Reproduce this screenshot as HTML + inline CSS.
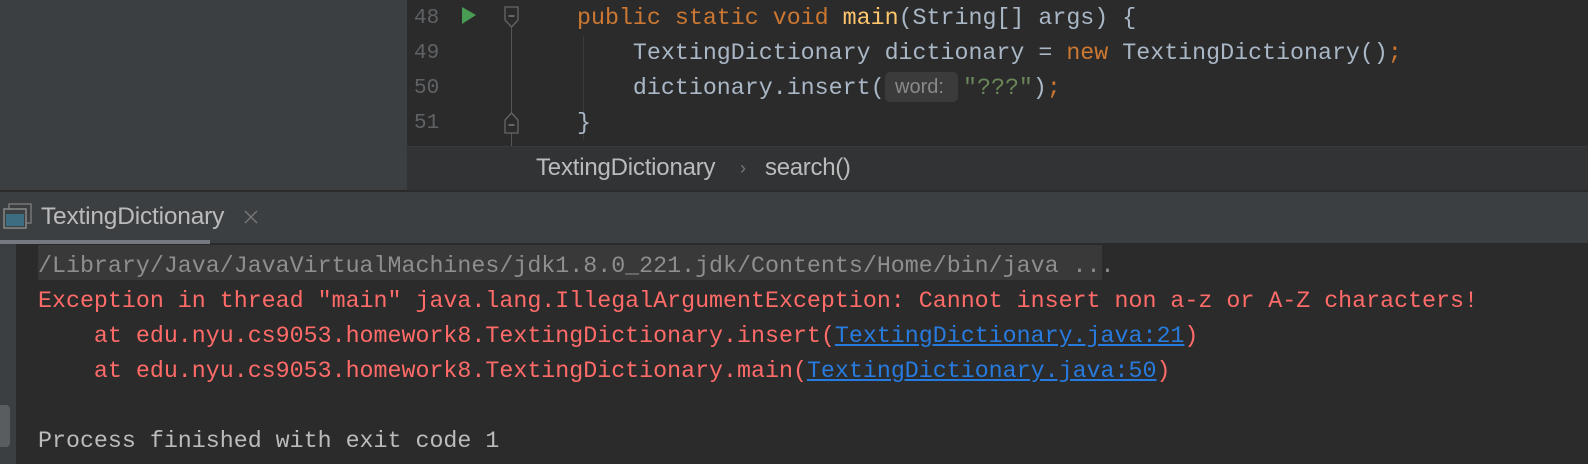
<!DOCTYPE html>
<html><head><meta charset="utf-8"><style>
*{margin:0;padding:0;box-sizing:border-box}
body{width:1588px;height:464px;overflow:hidden;background:#2b2b2b;position:relative;font-family:"Liberation Mono",monospace}
.abs{position:absolute}
.mono{font-family:"Liberation Mono",monospace;font-size:23.3px;white-space:pre;line-height:35px}
.sans{font-family:"Liberation Sans",sans-serif}
.kw{color:#cc7832}.fn{color:#ffc66d}.tx{color:#a9b7c6}.st{color:#6a8759}
.red{color:#ff6b68}.lnk{color:#287bde;text-decoration:underline}
.ln{color:#606366;font-size:21px;left:414px}
</style></head><body>
<div class="abs" style="left:0;top:0;width:407px;height:190px;background:#3c3f41"></div>
<div class="abs" style="left:407px;top:0;width:1181px;height:146px;background:#2b2b2b"></div>
<div class="abs" style="left:407px;top:146px;width:1181px;height:1px;background:#3a3a3a"></div>
<div class="abs" style="left:407px;top:147px;width:1181px;height:43px;background:#313335"></div>
<div class="abs" style="left:0;top:190px;width:1588px;height:2px;background:#2b2b2b"></div>
<div class="abs" style="left:0;top:192px;width:1588px;height:51px;background:#3c3f41"></div>
<div class="abs" style="left:0;top:240px;width:210px;height:4px;background:#747a80"></div>
<div class="abs" style="left:0;top:244px;width:16px;height:220px;background:#3c3f41"></div>
<div class="abs" style="left:0;top:405px;width:10px;height:42px;background:#5a5d60;border-radius:0 4px 4px 0"></div>

<div class="abs mono ln" style="top:1px">48</div>
<div class="abs mono ln" style="top:36px">49</div>
<div class="abs mono ln" style="top:71px">50</div>
<div class="abs mono ln" style="top:106px">51</div>
<svg class="abs" style="left:460px;top:6px" width="18" height="20"><polygon points="2,1 16,9 2,18" fill="#499c54"/></svg>
<div class="abs" style="left:511px;top:28px;width:1px;height:118px;background:#555"></div>
<svg class="abs" style="left:503px;top:6px" width="18" height="24"><path d="M2 1H15V14L8.5 21L2 14Z" fill="#2b2b2b" stroke="#666" stroke-width="1.3"/><path d="M5.5 10H11.5" stroke="#888" stroke-width="1.3"/></svg>
<svg class="abs" style="left:503px;top:110px" width="18" height="24"><path d="M2 23H15V10L8.5 3L2 10Z" fill="#2b2b2b" stroke="#666" stroke-width="1.3"/><path d="M5.5 15H11.5" stroke="#888" stroke-width="1.3"/></svg>
<div class="abs" style="left:583px;top:36px;width:1px;height:104px;background:#3b3b3b"></div>

<div class="abs mono" style="left:577px;top:1px"><span class="kw">public static void </span><span class="fn">main</span><span class="tx">(String[] args) {</span></div>
<div class="abs mono" style="left:577px;top:36px"><span class="tx">    TextingDictionary dictionary = </span><span class="kw">new </span><span class="tx">TextingDictionary()</span><span class="kw">;</span></div>
<div class="abs mono" style="left:577px;top:71px"><span class="tx">    dictionary.insert(</span></div>
<div class="abs sans" style="left:885px;top:72px;width:73px;height:30px;background:#3b3b3b;border-radius:5px;color:#8a8a8a;font-size:20px;line-height:30px;padding-left:10px">word:</div>
<div class="abs mono" style="left:963px;top:71px"><span class="st">"???"</span><span class="tx">)</span><span class="kw">;</span></div>
<div class="abs mono tx" style="left:577px;top:106px">}</div>

<div class="abs sans" style="left:536px;top:154px;font-size:24px;color:#bbbbbb;line-height:28px;letter-spacing:-0.2px">TextingDictionary</div>
<div class="abs sans" style="left:740px;top:155px;font-size:18px;color:#777;line-height:26px">›</div>
<div class="abs sans" style="left:765px;top:154px;font-size:24px;color:#bbbbbb;line-height:28px;letter-spacing:-0.3px">search()</div>

<svg class="abs" style="left:3px;top:203px" width="30" height="26"><rect x="6" y="1" width="22" height="19" fill="none" stroke="#777" stroke-width="1.5"/><rect x="1" y="6" width="22" height="19" fill="#3c3f41" stroke="#888" stroke-width="1.5"/><rect x="3" y="11" width="18" height="12" fill="#3d6d80"/></svg>
<div class="abs sans" style="left:41px;top:203px;font-size:24.5px;color:#bbbbbb;line-height:28px;letter-spacing:-0.2px">TextingDictionary</div>
<svg class="abs" style="left:244px;top:210px" width="14" height="14"><path d="M1 1L13 13M13 1L1 13" stroke="#777" stroke-width="1.4"/></svg>

<div class="abs" style="left:38px;top:245px;width:1064px;height:35px;background:#393939"></div>
<div class="abs mono" style="left:38px;top:249px;color:#8e8e8e">/Library/Java/JavaVirtualMachines/jdk1.8.0_221.jdk/Contents/Home/bin/java ...</div>
<div class="abs mono red" style="left:38px;top:284px">Exception in thread "main" java.lang.IllegalArgumentException: Cannot insert non a-z or A-Z characters!</div>
<div class="abs mono red" style="left:38px;top:319px">    at edu.nyu.cs9053.homework8.TextingDictionary.insert(<span class="lnk">TextingDictionary.java:21</span>)</div>
<div class="abs mono red" style="left:38px;top:354px">    at edu.nyu.cs9053.homework8.TextingDictionary.main(<span class="lnk">TextingDictionary.java:50</span>)</div>
<div class="abs mono" style="left:38px;top:424px;color:#bbbbbb">Process finished with exit code 1</div>
</body></html>
